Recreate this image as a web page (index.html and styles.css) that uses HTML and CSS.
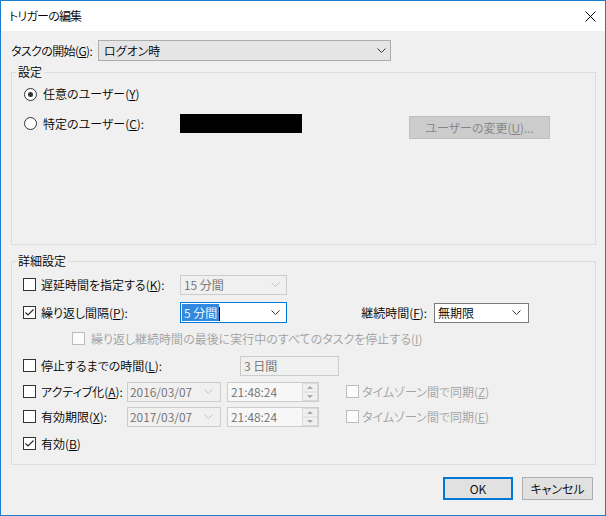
FILE: index.html
```html
<!DOCTYPE html>
<html lang="ja">
<head>
<meta charset="utf-8">
<title>トリガーの編集</title>
<link rel="stylesheet" href="styles.css">
</head>
<body>
<div class="window">
  <div class="titlebar">
    <span class="title">トリガーの編集</span>
    <svg class="close" width="11" height="11" viewBox="0 0 11 11"><path d="M0.5 0.5L10.5 10.5M10.5 0.5L0.5 10.5" stroke="#000" stroke-width="1" fill="none"/></svg>
  </div>
  <div class="body">
    <div class="start-row">
      <span class="start-label">タスクの開始(<u>G</u>):</span>
      <div class="combo combo-list start-combo">
        <span class="combo-text">ログオン時</span>
        <svg class="chev" width="9" height="5" viewBox="0 0 9 5"><path d="M0.5 0.5L4.5 4.5L8.5 0.5" stroke="#333" fill="none"/></svg>
      </div>
    </div>

    <fieldset class="group group-settings">
      <legend>設定</legend>
      <div class="settings-body">
        <div class="radio-row first">
          <span class="radio checked"></span>
          <span>任意のユーザー(<u>Y</u>)</span>
        </div>
        <div class="user-row">
          <div class="radio-row user-label">
            <span class="radio"></span>
            <span>特定のユーザー(<u>C</u>):</span>
          </div>
          <div class="redacted"></div>
          <div class="btn btn-disabled change-user">ユーザーの変更(<u>U</u>)...</div>
        </div>
      </div>
    </fieldset>

    <fieldset class="group group-advanced">
      <legend>詳細設定</legend>
      <div class="advanced-body">
        <div class="row r1">
          <div class="cbl w157"><span class="cb"></span><span>遅延時間を指定する(<u>K</u>):</span></div>
          <div class="combo combo-disabled w107">
            <span class="combo-text dis-field">15 分間</span>
            <svg class="chev" width="9" height="5" viewBox="0 0 9 5"><path d="M0.5 0.5L4.5 4.5L8.5 0.5" stroke="#c4c4c4" fill="none"/></svg>
          </div>
        </div>
        <div class="row r2">
          <div class="cbl w157"><span class="cb"><svg width="11" height="11" viewBox="0 0 11 11"><path d="M1.5 5.5L4 8L9.5 2.5" stroke="#222" stroke-width="1.1" fill="none"/></svg></span><span>繰り返し間隔(<u>P</u>):</span></div>
          <div class="combo combo-focus w107">
            <span class="combo-text"><span class="sel">5 分間</span><span class="caret"></span></span>
            <svg class="chev" width="9" height="5" viewBox="0 0 9 5"><path d="M0.5 0.5L4.5 4.5L8.5 0.5" stroke="#333" fill="none"/></svg>
          </div>
          <span class="dur-label">継続時間(<u>F</u>):</span>
          <div class="combo combo-edit w95">
            <span class="combo-text">無期限</span>
            <svg class="chev" width="9" height="5" viewBox="0 0 9 5"><path d="M0.5 0.5L4.5 4.5L8.5 0.5" stroke="#333" fill="none"/></svg>
          </div>
        </div>
        <div class="row r3">
          <div class="cbl sub dis-text"><span class="cb cb-disabled"></span><span>繰り返し継続時間の最後に実行中のすべてのタスクを停止する(<u>I</u>)</span></div>
        </div>
        <div class="row r4">
          <div class="cbl w217"><span class="cb"></span><span>停止するまでの時間(<u>L</u>):</span></div>
          <div class="combo combo-disabled w99">
            <span class="combo-text dis-field">3 日間</span>
          </div>
        </div>
        <div class="row r5">
          <div class="cbl w104"><span class="cb"></span><span>アクティブ化(<u>A</u>):</span></div>
          <div class="combo date w94">
            <span class="combo-text dis-field">2016/03/07</span>
            <svg class="chev" width="9" height="5" viewBox="0 0 9 5"><path d="M0.5 0.5L4.5 4.5L8.5 0.5" stroke="#c4c4c4" fill="none"/></svg>
          </div>
          <div class="combo time w92">
            <span class="combo-text dis-field">21:48:24</span>
            <svg class="spin" width="16" height="18" viewBox="0 0 16 18"><rect x="0.5" y="0.5" width="15" height="17" fill="#f0f0f0" stroke="#dadada"/><path d="M0.5 9H15.5" stroke="#dadada"/><path d="M5 6L8 3L11 6Z M5 12L8 15L11 12Z" fill="#a8a8a8"/></svg>
          </div>
          <div class="cbl sync dis-text"><span class="cb cb-disabled"></span><span>タイムゾーン間で同期(<u>Z</u>)</span></div>
        </div>
        <div class="row r6">
          <div class="cbl w104"><span class="cb"></span><span>有効期限(<u>X</u>):</span></div>
          <div class="combo date w94">
            <span class="combo-text dis-field">2017/03/07</span>
            <svg class="chev" width="9" height="5" viewBox="0 0 9 5"><path d="M0.5 0.5L4.5 4.5L8.5 0.5" stroke="#c4c4c4" fill="none"/></svg>
          </div>
          <div class="combo time w92">
            <span class="combo-text dis-field">21:48:24</span>
            <svg class="spin" width="16" height="18" viewBox="0 0 16 18"><rect x="0.5" y="0.5" width="15" height="17" fill="#f0f0f0" stroke="#dadada"/><path d="M0.5 9H15.5" stroke="#dadada"/><path d="M5 6L8 3L11 6Z M5 12L8 15L11 12Z" fill="#a8a8a8"/></svg>
          </div>
          <div class="cbl sync dis-text"><span class="cb cb-disabled"></span><span>タイムゾーン間で同期(<u>E</u>)</span></div>
        </div>
        <div class="row r7">
          <div class="cbl"><span class="cb"><svg width="11" height="11" viewBox="0 0 11 11"><path d="M1.5 5.5L4 8L9.5 2.5" stroke="#222" stroke-width="1.1" fill="none"/></svg></span><span>有効(<u>B</u>)</span></div>
        </div>
      </div>
    </fieldset>

    <div class="buttons">
      <div class="btn btn-default">OK</div>
      <div class="btn btn-cancel">キャンセル</div>
    </div>
  </div>
</div>
</body>
</html>
```

FILE: styles.css
```css
html, body {
  margin: 0;
  padding: 0;
}
body {
  width: 606px;
  height: 516px;
  background: #f0f0f0;
  font-family: "Noto Sans CJK JP", "Noto Sans", sans-serif;
  font-size: 12px;
  font-weight: 350;
  line-height: 16px;
  color: #000;
  font-feature-settings: "palt";
  overflow: hidden;
}
u {
  text-decoration: underline;
  text-underline-offset: 1px;
}
.window {
  box-sizing: border-box;
  width: 606px;
  height: 516px;
  border: 1px solid #1d7ccb;
  background: #f0f0f0;
  display: flex;
  flex-direction: column;
}
.titlebar {
  flex: none;
  height: 30px;
  background: #fff;
  display: flex;
  align-items: center;
  justify-content: space-between;
  padding: 0 9px 0 8px;
}
.title {
  color: #000;
  white-space: nowrap;
  letter-spacing: -0.8px;
}
.close {
  display: block;
}
.body {
  flex: 1;
  display: flex;
  flex-direction: column;
  padding: 0 9px 0 10px;
}
.start-row {
  display: flex;
  align-items: center;
  margin-top: 9px;
  height: 21px;
}
.start-label {
  width: 87px;
  flex: none;
  white-space: nowrap;
  letter-spacing: -0.6px;
}
.combo {
  box-sizing: border-box;
  height: 21px;
  display: flex;
  align-items: center;
  justify-content: space-between;
  padding: 0 6px 0 3px;
  flex: none;
  white-space: nowrap;
}
.chev {
  display: block;
  flex: none;
}
.combo-list {
  background: #e5e5e5;
  border: 1px solid #adadad;
}
.start-combo {
  width: 293px;
  padding-left: 5px;
  padding-right: 4px;
}
.combo-disabled {
  background: #f0f0f0;
  border: 1px solid #cccccc;
  height: 20px;
}
.combo-focus {
  background: #fff;
  border: 1px solid #0078d7;
  padding-left: 1px;
}
.combo-edit {
  background: #fff;
  border: 1px solid #7a7a7a;
  height: 20px;
  padding-right: 7px;
}
.date {
  background: #f0f0f0;
  border: 1px solid #cccccc;
  height: 20px;
  padding-left: 2px;
  padding-right: 7px;
}
.time {
  background: #f7f7f7;
  border: 1px solid #cccccc;
  height: 20px;
  padding-right: 0;
  margin-left: 6px;
}
.spin {
  display: block;
  flex: none;
}
.dis-field {
  color: #6d6d6d;
}
.dis-text {
  color: #a0a0a0;
}
.sel {
  background: #3088e0;
  color: #fff;
  padding: 0 2px;
}
.caret {
  display: inline-block;
  width: 1px;
  height: 14px;
  background: #000;
  vertical-align: -3px;
}
.w107 { width: 107px; }
.w95 { width: 95px; }
.w99 { width: 99px; }
.w94 { width: 94px; }
.w92 { width: 92px; }
.w157 { width: 157px; }
.w217 { width: 217px; }
.w104 { width: 104px; }

.group {
  margin: 0;
  padding: 0;
  border: 1px solid #dcdcdc;
  min-width: 0;
}
.group legend {
  margin-left: 4px;
  padding: 0 2px;
  line-height: 16px;
}
.group-settings {
  margin-top: 3px;
}
.settings-body {
  display: flex;
  flex-direction: column;
  height: 164px;
  padding: 6px 0 0 12px;
  box-sizing: border-box;
}
.radio-row {
  display: flex;
  align-items: center;
  gap: 6px;
  height: 16px;
}
.radio {
  box-sizing: border-box;
  width: 13px;
  height: 13px;
  border: 1px solid #333;
  border-radius: 50%;
  background: #fff;
  flex: none;
  display: flex;
  align-items: center;
  justify-content: center;
}
.radio.checked::after {
  content: "";
  width: 5px;
  height: 5px;
  border-radius: 50%;
  background: #333;
}
.user-row {
  display: flex;
  align-items: flex-start;
  margin-top: 12px;
}
.user-label {
  width: 156px;
  height: 19px;
  flex: none;
}
.redacted {
  width: 122px;
  height: 19px;
  background: #000;
  flex: none;
}
.btn {
  box-sizing: border-box;
  height: 23px;
  display: flex;
  align-items: center;
  justify-content: center;
  flex: none;
}
.btn-disabled {
  background: #cccccc;
  border: 1px solid #bfbfbf;
  color: #838383;
}
.change-user {
  width: 141px;
  margin-left: 107px;
  margin-top: 2px;
}
.group-advanced {
  margin-top: 8px;
}
.advanced-body {
  display: flex;
  flex-direction: column;
  height: 195px;
  padding: 5px 0 0 11px;
  box-sizing: border-box;
}
.row {
  display: flex;
  align-items: center;
  height: 21px;
  flex: none;
}
.r2 { margin-top: 7px; }
.r3 { margin-top: 5px; }
.r4 { margin-top: 6px; }
.r5 { margin-top: 5px; }
.r6 { margin-top: 4px; }
.r7 { margin-top: 6px; }
.cbl {
  display: flex;
  align-items: center;
  gap: 5px;
  flex: none;
  white-space: nowrap;
}
.cb {
  box-sizing: border-box;
  width: 13px;
  height: 13px;
  border: 1px solid #333;
  background: #fff;
  flex: none;
  display: flex;
  align-items: center;
  justify-content: center;
}
.cb svg {
  display: block;
}
.cb-disabled {
  border-color: #bcbcbc;
  background: #fbfbfb;
}
.sub {
  margin-left: 49px;
  gap: 6px;
}
.sync {
  margin-left: 27px;
  gap: 3px;
}
.dur-label {
  width: 140px;
  text-align: right;
  flex: none;
  margin-right: 7px;
}
.buttons {
  display: flex;
  justify-content: flex-end;
  gap: 9px;
  margin-top: 12px;
  margin-right: 3px;
}
.btn-default {
  width: 70px;
  background: #e1e1e1;
  border: 2px solid #0078d7;
}
.btn-cancel {
  width: 71px;
  background: #e1e1e1;
  border: 1px solid #adadad;
}
```
